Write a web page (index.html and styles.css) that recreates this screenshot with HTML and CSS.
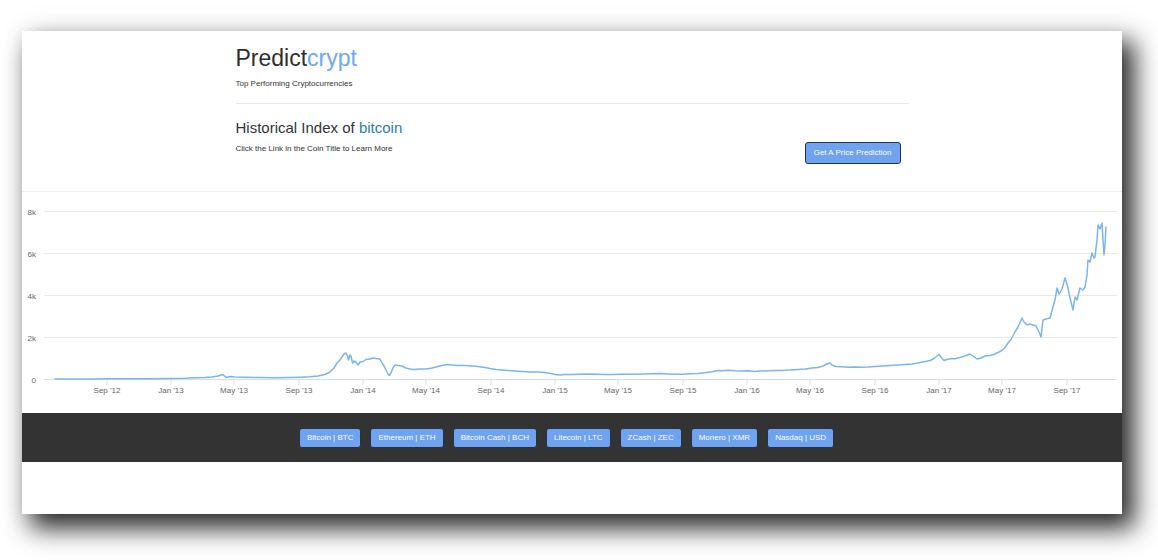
FILE: index.html
```html
<!DOCTYPE html>
<html lang="en">
<head>
<meta charset="utf-8">
<title>Predictcrypt</title>
<link rel="stylesheet" href="styles.css">
</head>
<body>
<div class="card">
  <header class="intro">
    <div class="container">
      <h1 class="brand">Predict<span class="accent">crypt</span></h1>
      <p class="tagline">Top Performing Cryptocurrencies</p>
      <hr class="divider">
      <div class="index-row">
        <div class="index-text">
          <h2 class="index-title">Historical Index of <a href="#">bitcoin</a></h2>
          <p class="index-note">Click the Link in the Coin Title to Learn More</p>
        </div>
        <button class="btn predict-btn">Get A Price Prediction</button>
      </div>
    </div>
  </header>

  <section class="chart">
    <svg width="1100" height="222" viewBox="22 191 1100 222" xmlns="http://www.w3.org/2000/svg">
      <line class="top-rule" x1="22" y1="191.5" x2="1122" y2="191.5"/>
      <g class="grid">
        <line x1="44" y1="211.5" x2="1117" y2="211.5"/>
        <line x1="44" y1="253.5" x2="1117" y2="253.5"/>
        <line x1="44" y1="295.5" x2="1117" y2="295.5"/>
        <line x1="44" y1="337.5" x2="1117" y2="337.5"/>
      </g>
      <line class="axis" x1="44" y1="379.5" x2="1117" y2="379.5"/>
      <g class="ticks">
        <line x1="107" y1="379.5" x2="107" y2="385"/>
        <line x1="171" y1="379.5" x2="171" y2="385"/>
        <line x1="234" y1="379.5" x2="234" y2="385"/>
        <line x1="299" y1="379.5" x2="299" y2="385"/>
        <line x1="363" y1="379.5" x2="363" y2="385"/>
        <line x1="426" y1="379.5" x2="426" y2="385"/>
        <line x1="491" y1="379.5" x2="491" y2="385"/>
        <line x1="555" y1="379.5" x2="555" y2="385"/>
        <line x1="618" y1="379.5" x2="618" y2="385"/>
        <line x1="683" y1="379.5" x2="683" y2="385"/>
        <line x1="747" y1="379.5" x2="747" y2="385"/>
        <line x1="810" y1="379.5" x2="810" y2="385"/>
        <line x1="875" y1="379.5" x2="875" y2="385"/>
        <line x1="939" y1="379.5" x2="939" y2="385"/>
        <line x1="1002" y1="379.5" x2="1002" y2="385"/>
        <line x1="1067" y1="379.5" x2="1067" y2="385"/>
      </g>
      <g class="ylabels">
        <text x="36" y="215">8k</text>
        <text x="36" y="257">6k</text>
        <text x="36" y="299">4k</text>
        <text x="36" y="341">2k</text>
        <text x="36" y="383">0</text>
      </g>
      <g class="xlabels">
        <text x="107" y="392.5">Sep '12</text>
        <text x="171" y="392.5">Jan '13</text>
        <text x="234" y="392.5">May '13</text>
        <text x="299" y="392.5">Sep '13</text>
        <text x="363" y="392.5">Jan '14</text>
        <text x="426" y="392.5">May '14</text>
        <text x="491" y="392.5">Sep '14</text>
        <text x="555" y="392.5">Jan '15</text>
        <text x="618" y="392.5">May '15</text>
        <text x="683" y="392.5">Sep '15</text>
        <text x="747" y="392.5">Jan '16</text>
        <text x="810" y="392.5">May '16</text>
        <text x="875" y="392.5">Sep '16</text>
        <text x="939" y="392.5">Jan '17</text>
        <text x="1002" y="392.5">May '17</text>
        <text x="1067" y="392.5">Sep '17</text>
      </g>
      <polyline class="series" points="55,379 70,379 90,378.9 107,378.8 130,378.8 150,378.7 171,378.5 185,378.3 195,377.8 205,377.5 212,377 218,376 223,374.5 226,377.5 230,376.5 235,377 245,377.2 260,377.6 275,377.8 290,377.5 300,377.2 310,376.8 318,376 325,374.5 330,372 334,368 337,363 340,360 342,357 344,354 346,353 347.5,356 348.5,360 350,355 351,356 352.5,363 354,361 356,362 358,365 360,362 363,361.5 366,359.5 370,359 373,358 376,358.5 380,359 382,363 384,366 386,370 388,374 389.5,375.5 391,373 393,368 395,365 398,365.5 402,366 406,368 410,369 414,369.5 420,369 426,369 432,368 438,366.5 442,365.5 447,364.5 452,365 458,365.5 465,365.5 472,366 478,366.5 485,367.5 490,368.5 496,369.5 502,370 508,370.5 515,371 522,371.5 530,372 538,372 545,372.5 551,373.5 555,374.5 560,375 565,374.5 572,374.5 580,374.2 588,374 596,374.3 605,374.6 612,374.5 620,374.2 628,374.3 636,374.2 645,374 652,373.8 660,373.6 668,374 675,374.3 682,374.2 690,373.8 698,373.4 705,372.8 712,371.8 718,370.5 722,370.8 728,370.2 735,370.8 742,371 748,370.8 754,371.5 760,371 768,370.8 775,370.6 782,370.4 790,370 798,369.4 805,369 812,368 818,367.5 823,366 827,364 830,363 832,365 836,366.5 842,366.8 848,367.3 855,367 862,367.2 868,367 875,366.5 882,366 890,365.5 898,365 905,364.5 912,364 918,363 924,361.8 930,360.5 934,358.5 937,356 939,354.5 941,357 944,360.5 947,359.5 951,358.5 955,358.8 960,357.5 966,355.5 970,354 973,356 977,359 981,358 985,356 990,355.5 995,354 999,352 1002,350.5 1005,347.5 1008,343 1011,339.5 1015,332 1018,327 1022,318 1024,322 1027,325 1030,324 1033,325 1036,326 1037,328 1039,332 1041,337 1043,320 1046,319 1050,318 1053,307 1055,300 1057,288 1059,294 1060,293 1062,289 1065,278 1067,284 1068,288 1070,298 1073,310 1075,297 1077,300 1080,288 1083,290 1085,287 1087,275 1088,260 1090,262 1092,253 1094,258 1095,257 1097,240 1098,225 1100,229 1102,223 1103,240 1104,255 1105,245 1106,227"/>
    </svg>
  </section>

  <footer class="coins">
    <button class="btn coin-btn">Bitcoin | BTC</button>
    <button class="btn coin-btn">Ethereum | ETH</button>
    <button class="btn coin-btn">Bitcoin Cash | BCH</button>
    <button class="btn coin-btn">Litecoin | LTC</button>
    <button class="btn coin-btn">ZCash | ZEC</button>
    <button class="btn coin-btn">Monero | XMR</button>
    <button class="btn coin-btn">Nasdaq | USD</button>
  </footer>
  <div class="spacer"></div>
</div>
</body>
</html>
```

FILE: styles.css
```css
html {
  margin: 0;
  height: 560px;
  background: #ffffff;
  overflow: hidden;
}

body {
  margin: 0;
  height: 560px;
  box-sizing: border-box;
  padding: 31px 0 0 22px;
  background: #ffffff;
  font-family: "Liberation Sans", Arial, Helvetica, sans-serif;
  color: #333333;
}

.card {
  width: 1100px;
  height: 483px;
  background: #ffffff;
  box-shadow: 10px 12px 24px 2px rgba(0, 0, 0, 0.85);
  display: flex;
  flex-direction: column;
}

.intro {
  height: 160px;
  padding-top: 13px;
  box-sizing: border-box;
}

.container {
  width: 673px;
  margin: 0 auto;
}

.brand {
  margin: 0;
  font-size: 23px;
  line-height: 28px;
  font-weight: normal;
  color: #2e2e2e;
}

.brand .accent {
  color: #6ea7f5;
}

.tagline {
  margin: 6px 0 0;
  font-size: 8px;
  line-height: 12px;
}

.divider {
  border: 0;
  border-top: 1px solid #e8e8e8;
  height: 0;
  margin: 13px 0 0;
}

.index-row {
  display: flex;
  justify-content: space-between;
  align-items: flex-start;
  margin-top: 15px;
}

.index-title {
  margin: 0;
  font-size: 15px;
  line-height: 18px;
  font-weight: normal;
}

.index-title a {
  color: #337ab7;
  text-decoration: none;
}

.index-note {
  margin: 6px 0 0;
  font-size: 8px;
  line-height: 12px;
}

.btn {
  font-family: "Liberation Sans", Arial, Helvetica, sans-serif;
  font-size: 8px;
  color: #ffffff;
  background: #6fa2ef;
  border: 1px solid #25334a;
  border-radius: 3px;
  margin: 0;
  cursor: pointer;
}

.predict-btn {
  line-height: 20px;
  padding: 0 8px;
  margin: 23px 8px 0 0;
}

.chart {
  height: 222px;
}

.chart svg {
  display: block;
}

.top-rule {
  stroke: #efefef;
  stroke-width: 1;
}

.grid line {
  stroke: #e9e9e9;
  stroke-width: 1;
}

.axis {
  stroke: #d5dcea;
  stroke-width: 1;
}

.ticks line {
  stroke: #d5dcea;
  stroke-width: 1;
}

.ylabels text,
.xlabels text {
  font-family: "Liberation Sans", Arial, Helvetica, sans-serif;
  font-size: 8px;
  fill: #666666;
}

.ylabels text {
  text-anchor: end;
}

.xlabels text {
  text-anchor: middle;
}

.series {
  fill: none;
  stroke: #7cb5ec;
  stroke-width: 1.5;
  stroke-linejoin: round;
  stroke-linecap: round;
}

.coins {
  height: 49px;
  flex: none;
  background: #333333;
  display: flex;
  justify-content: center;
  align-items: center;
  gap: 9px;
  padding-right: 11px;
  box-sizing: border-box;
}

.coin-btn {
  line-height: 18px;
  padding: 0 7px;
}

.spacer {
  flex: 1;
}
```
